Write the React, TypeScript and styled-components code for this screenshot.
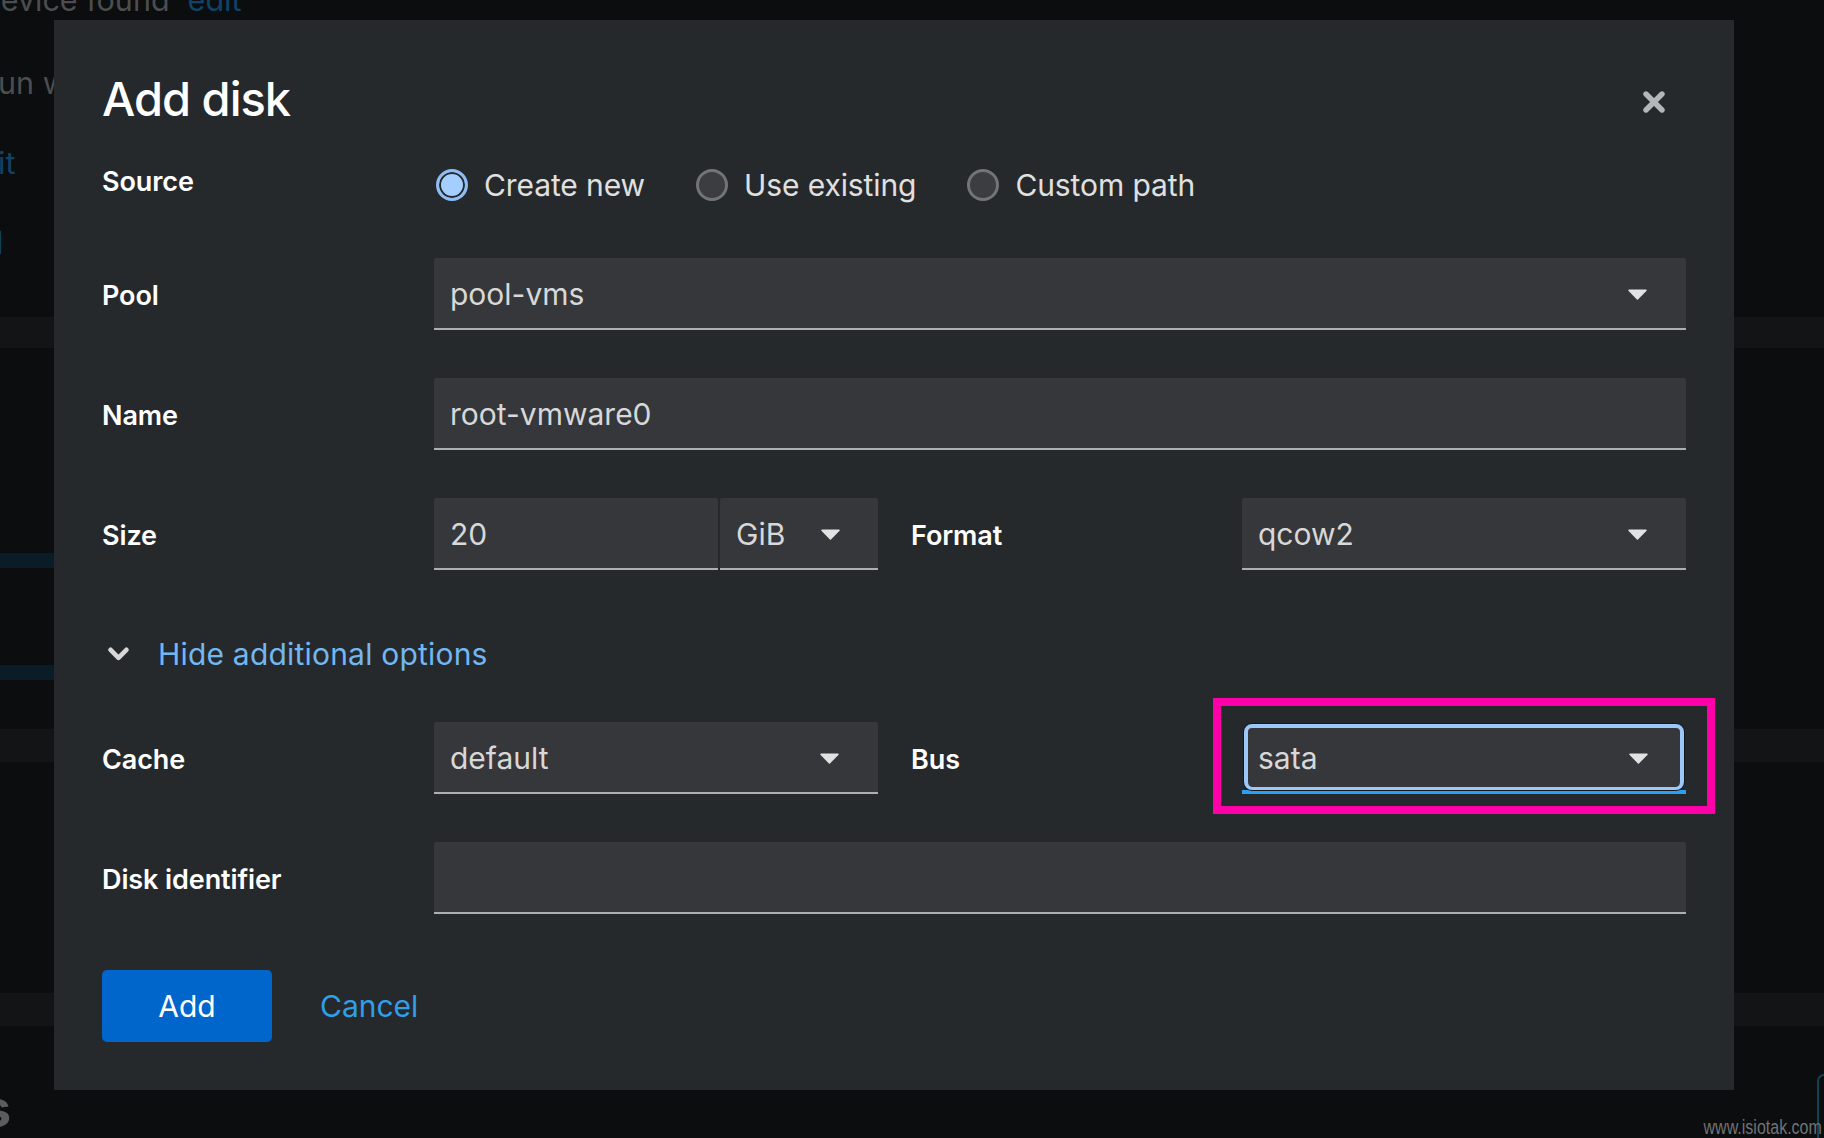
import React from "react";
import styled, { createGlobalStyle } from "styled-components";

const Global = createGlobalStyle`
  html, body { margin: 0; padding: 0; background: #0b0d0f; }
  body { font-family: "Inter", "Open Sans", sans-serif; }
`;

const Page = styled.div`
  position: relative;
  width: 1824px;
  height: 1138px;
  overflow: hidden;
  background: #0b0d0f;
`;

const Behind = styled.div`
  display: flex;
  flex-direction: column;
  height: 1138px;
`;

const BehindLine = styled.div<{ $gap: number; $indent: number; $blue?: boolean }>`
  margin-top: ${(p) => p.$gap}px;
  margin-left: ${(p) => p.$indent}px;
  height: 40px;
  line-height: 40px;
  font-size: 30.5px;
  white-space: nowrap;
  color: ${(p) => (p.$blue ? "#0f4468" : "#4b4d4f")};
`;

const BehindLink = styled.span`
  margin-left: 18px;
  color: #0f4468;
`;

const Band = styled.div<{ $gap: number; $h: number; $blue?: boolean }>`
  margin-top: ${(p) => p.$gap}px;
  height: ${(p) => p.$h}px;
  flex: none;
  width: ${(p) => (p.$blue ? "54px" : "100%")};
  background: ${(p) => (p.$blue ? "#0b1c29" : "#121416")};
`;

const BehindBottom = styled.div`
  margin-top: 48px;
  flex: 1;
  display: flex;
  justify-content: space-between;
  align-items: flex-start;
`;

const BehindHeading = styled.div`
  margin: 5px 0 0 -18px;
  font-size: 52px;
  line-height: 60px;
  font-weight: 700;
  color: #5a5c5e;
`;

const BehindButton = styled.div`
  width: 7px;
  height: 80px;
  border: 2px solid #0c4558;
  border-right: none;
  border-radius: 8px 0 0 0;
  box-sizing: border-box;
`;

const Modal = styled.section`
  position: absolute;
  left: 54px;
  top: 20px;
  width: 1680px;
  height: 1070px;
  box-sizing: border-box;
  padding: 0 48px 0 48px;
  background: #26292c;
  display: flex;
  flex-direction: column;
`;

const Header = styled.header`
  height: 145px;
  flex: none;
  display: flex;
  align-items: center;
  justify-content: space-between;
  padding: 13px 21px 0 0;
  box-sizing: border-box;
`;

const Title = styled.h1`
  margin: 0;
  font-size: 47px;
  line-height: 56px;
  font-weight: 500;
  letter-spacing: -1px;
  color: #ffffff;
`;

const CloseButton = styled.button`
  display: flex;
  padding: 0;
  margin-top: 6px;
  background: none;
  border: none;
`;

const Form = styled.form`
  display: flex;
  flex-direction: column;
  gap: 48px;
`;

const Row = styled.div`
  display: grid;
  grid-template-columns: 332px 1fr;
  align-items: center;
  height: 72px;
`;

const SourceRow = styled(Row)`
  align-items: start;
  height: 45px;
`;

const Label = styled.label`
  font-size: 27px;
  font-weight: 600;
  letter-spacing: -0.1px;
  color: #ffffff;
  white-space: nowrap;
  padding-top: 3px;
`;

const SourceLabel = styled(Label)`
  margin-top: -3px;
`;

const RadioGroup = styled.div`
  display: flex;
  align-items: center;
  padding-left: 2px;
  gap: 51px;
  margin-top: 2px;
`;

const RadioOption = styled.span`
  display: flex;
  align-items: center;
  gap: 16px;
  font-size: 30px;
  letter-spacing: -0.1px;
  color: #e0e0e0;
`;

const RadioMark = styled.span<{ $on?: boolean }>`
  flex: none;
  width: 32px;
  height: 32px;
  box-sizing: border-box;
  border-radius: 50%;
  border: ${(p) => (p.$on ? "3px solid #8fbdf3" : "3px solid #727476")};
  background: ${(p) => (p.$on ? "#a3ceff" : "#3b3d40")};
  box-shadow: ${(p) => (p.$on ? "inset 0 0 0 2px #26292c" : "none")};
`;

const Field = styled.div<{ $w?: number }>`
  flex: ${(p) => (p.$w ? "none" : "1")};
  width: ${(p) => (p.$w ? `${p.$w}px` : "auto")};
  min-width: 0;
  height: 72px;
  box-sizing: border-box;
  display: flex;
  align-items: center;
  justify-content: space-between;
  padding: 2px 39px 0 16px;
  background: #36373b;
  border-bottom: 2px solid #adafb1;
  border-radius: 2px 2px 0 0;
  font-size: 30px;
  color: #d8d8d8;
`;

const FocusWrap = styled.div`
  position: relative;
  flex: 1;
  min-width: 0;
  height: 72px;
  box-sizing: border-box;
  padding-top: 2px;
  border-bottom: 4px solid #2aa0f2;
`;

const FocusField = styled.div`
  height: 66px;
  box-sizing: border-box;
  margin: 0 2px;
  display: flex;
  align-items: center;
  justify-content: space-between;
  padding: 1px 32px 0 10px;
  background: #36373b;
  border: 4px solid #9cc7fa;
  border-bottom-width: 3px;
  border-radius: 8px;
  box-shadow: 0 0 0 1px #15171a;
  font-size: 30px;
  color: #d8d8d8;
`;

const Annotation = styled.div`
  position: absolute;
  top: -24px;
  bottom: -24px;
  left: -29px;
  right: -29px;
  border: 8px solid #ff00a8;
  pointer-events: none;
`;

const FieldPair = styled.div`
  display: flex;
  align-items: center;
`;

const UnitSelect = styled(Field)`
  margin-left: 2px;
  padding-right: 38px;
`;

const InlineLabel = styled(Label)`
  flex: none;
  width: 364px;
  padding-left: 33px;
  box-sizing: border-box;
`;

const Toggle = styled.div`
  height: 56px;
  margin: 8px 0 -8px;
  display: flex;
  align-items: center;
  padding-left: 6px;
  gap: 29px;
  font-size: 30px;
  letter-spacing: 0.2px;
  color: #73b7f0;
`;

const Footer = styled.div`
  margin-top: 8px;
  display: flex;
  align-items: center;
  gap: 48px;
`;

const PrimaryButton = styled.button`
  width: 170px;
  height: 72px;
  border: none;
  border-radius: 5px;
  background: #0066cc;
  color: #ffffff;
  font: inherit;
  font-size: 30px;
`;

const LinkButton = styled.a`
  font-size: 30px;
  letter-spacing: 0;
  color: #2f9fe8;
`;

const Watermark = styled.div`
  position: absolute;
  right: 2px;
  bottom: 0;
  font-family: "Liberation Sans", sans-serif;
  font-size: 20px;
  line-height: 22px;
  color: #717375;
  transform: scaleX(0.8);
  transform-origin: right center;
`;

const Caret = () => (
  <svg width="19" height="11" viewBox="0 0 19 11" fill="#e2e2e2">
    <path d="M1 0.5h17a.8.8 0 0 1 .6 1.3L10 10.4a.8.8 0 0 1-1.1 0L.4 1.8A.8.8 0 0 1 1 .5z" />
  </svg>
);

const CloseIcon = () => (
  <svg width="22" height="22" viewBox="0 0 22 22" fill="none" stroke="#b4b7ba" strokeWidth="5.4" strokeLinecap="round">
    <path d="M3 3l16 16M19 3L3 19" />
  </svg>
);

const Chevron = () => (
  <svg width="21" height="14" viewBox="0 0 21 14" fill="none" stroke="#d8d8d8" strokeWidth="4.6" strokeLinecap="round" strokeLinejoin="round">
    <path d="M2.6 2.8l7.9 8 7.9-8" />
  </svg>
);

export default function App() {
  return (
    <Page>
      <Global />
      <Behind>
        <BehindLine $gap={-20} $indent={-18}>
          device found<BehindLink>edit</BehindLink>
        </BehindLine>
        <BehindLine $gap={43} $indent={-2}>un w</BehindLine>
        <BehindLine $gap={40} $indent={-2} $blue>it</BehindLine>
        <BehindLine $gap={40} $indent={-4} $blue>l</BehindLine>
        <Band $gap={54} $h={31} />
        <Band $gap={205} $h={15} $blue />
        <Band $gap={97} $h={15} $blue />
        <Band $gap={49} $h={33} />
        <Band $gap={231} $h={33} />
        <BehindBottom>
          <BehindHeading>s</BehindHeading>
          <BehindButton />
        </BehindBottom>
      </Behind>

      <Modal>
        <Header>
          <Title>Add disk</Title>
          <CloseButton type="button" aria-label="Close">
            <CloseIcon />
          </CloseButton>
        </Header>
        <Form>
          <SourceRow>
            <SourceLabel>Source</SourceLabel>
            <RadioGroup>
              <RadioOption><RadioMark $on />Create new</RadioOption>
              <RadioOption><RadioMark />Use existing</RadioOption>
              <RadioOption><RadioMark />Custom path</RadioOption>
            </RadioGroup>
          </SourceRow>
          <Row>
            <Label>Pool</Label>
            <Field>pool-vms<Caret /></Field>
          </Row>
          <Row>
            <Label>Name</Label>
            <Field>root-vmware0</Field>
          </Row>
          <Row>
            <Label>Size</Label>
            <FieldPair>
              <Field $w={284}>20</Field>
              <UnitSelect $w={158}>GiB<Caret /></UnitSelect>
              <InlineLabel>Format</InlineLabel>
              <Field $w={444}>qcow2<Caret /></Field>
            </FieldPair>
          </Row>
          <Toggle><Chevron />Hide additional options</Toggle>
          <Row>
            <Label>Cache</Label>
            <FieldPair>
              <Field $w={444}>default<Caret /></Field>
              <InlineLabel>Bus</InlineLabel>
              <FocusWrap>
                <FocusField>sata<Caret /></FocusField>
                <Annotation />
              </FocusWrap>
            </FieldPair>
          </Row>
          <Row>
            <Label>Disk identifier</Label>
            <Field />
          </Row>
          <Footer>
            <PrimaryButton type="button">Add</PrimaryButton>
            <LinkButton>Cancel</LinkButton>
          </Footer>
        </Form>
      </Modal>
      <Watermark>www.isiotak.com</Watermark>
    </Page>
  );
}
